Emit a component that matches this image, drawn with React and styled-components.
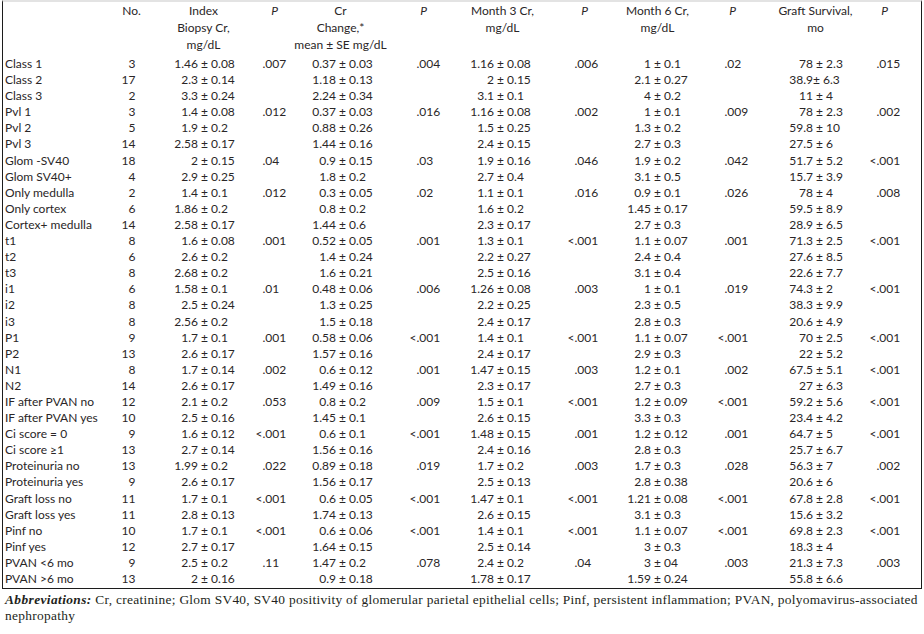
import styled, { createGlobalStyle } from "styled-components";

const GlobalStyle = createGlobalStyle`
  html, body {
    margin: 0;
    padding: 0;
    background: #ffffff;
  }
  body {
    font-family: Lato, "Open Sans", sans-serif;
    color: #2a2627;
  }
`;

const COLS = "108.5px 40px 104px 38px 94px 72px 86px 78px 68px 82px 84px 54px 8.5px";

// anchor: px from column start to the split point (number end / decimal dot)
const VALUE_COLS = [
  { anchor: 46.5, sep: "±" },
  { anchor: 7, sep: "." },
  { anchor: 42.5, sep: "±" },
  { anchor: 29, sep: "." },
  { anchor: 34.5, sep: "±" },
  { anchor: 29, sep: "." },
  { anchor: 27.5, sep: "±" },
  { anchor: 33, sep: "." },
  { anchor: 39.5, sep: "±" },
  { anchor: 19, sep: "." },
];

const ROWS = [
  ["Class 1", "3", "1.46 ± 0.08", ".007", "0.37 ± 0.03", ".004", "1.16 ± 0.08", ".006", "1 ± 0.1", ".02", "78 ± 2.3", ".015"],
  ["Class 2", "17", "2.3 ± 0.14", "", "1.18 ± 0.13", "", "2 ± 0.15", "", "2.1 ± 0.27", "", "38.9± 6.3", ""],
  ["Class 3", "2", "3.3 ± 0.24", "", "2.24 ± 0.34", "", "3.1 ± 0.1", "", "4 ± 0.2", "", "11 ± 4", ""],
  ["Pvl 1", "3", "1.4 ± 0.08", ".012", "0.37 ± 0.03", ".016", "1.16 ± 0.08", ".002", "1 ± 0.1", ".009", "78 ± 2.3", ".002"],
  ["Pvl 2", "5", "1.9 ± 0.2", "", "0.88 ± 0.26", "", "1.5 ± 0.25", "", "1.3 ± 0.2", "", "59.8 ± 10", ""],
  ["Pvl 3", "14", "2.58 ± 0.17", "", "1.44 ± 0.16", "", "2.4 ± 0.15", "", "2.7 ± 0.3", "", "27.5 ± 6", ""],
  ["Glom -SV40", "18", "2 ± 0.15", ".04", "0.9 ± 0.15", ".03", "1.9 ± 0.16", ".046", "1.9 ± 0.2", ".042", "51.7 ± 5.2", "<.001"],
  ["Glom SV40+", "4", "2.9 ± 0.25", "", "1.8 ± 0.2", "", "2.7 ± 0.4", "", "3.1 ± 0.5", "", "15.7 ± 3.9", ""],
  ["Only medulla", "2", "1.4 ± 0.1", ".012", "0.3 ± 0.05", ".02", "1.1 ± 0.1", ".016", "0.9 ± 0.1", ".026", "78 ± 4", ".008"],
  ["Only cortex", "6", "1.86 ± 0.2", "", "0.8 ± 0.2", "", "1.6 ± 0.2", "", "1.45 ± 0.17", "", "59.5 ± 8.9", ""],
  ["Cortex+ medulla", "14", "2.58 ± 0.17", "", "1.44 ± 0.6", "", "2.3 ± 0.17", "", "2.7 ± 0.3", "", "28.9 ± 6.5", ""],
  ["t1", "8", "1.6 ± 0.08", ".001", "0.52 ± 0.05", ".001", "1.3 ± 0.1", "<.001", "1.1 ± 0.07", ".001", "71.3 ± 2.5", "<.001"],
  ["t2", "6", "2.6 ± 0.2", "", "1.4 ± 0.24", "", "2.2 ± 0.27", "", "2.4 ± 0.4", "", "27.6 ± 8.5", ""],
  ["t3", "8", "2.68 ± 0.2", "", "1.6 ± 0.21", "", "2.5 ± 0.16", "", "3.1 ± 0.4", "", "22.6 ± 7.7", ""],
  ["i1", "6", "1.58 ± 0.1", ".01", "0.48 ± 0.06", ".006", "1.26 ± 0.08", ".003", "1 ± 0.1", ".019", "74.3 ± 2", "<.001"],
  ["i2", "8", "2.5 ± 0.24", "", "1.3 ± 0.25", "", "2.2 ± 0.25", "", "2.3 ± 0.5", "", "38.3 ± 9.9", ""],
  ["i3", "8", "2.56 ± 0.2", "", "1.5 ± 0.18", "", "2.4 ± 0.17", "", "2.8 ± 0.3", "", "20.6 ± 4.9", ""],
  ["P1", "9", "1.7 ± 0.1", ".001", "0.58 ± 0.06", "<.001", "1.4 ± 0.1", "<.001", "1.1 ± 0.07", "<.001", "70 ± 2.5", "<.001"],
  ["P2", "13", "2.6 ± 0.17", "", "1.57 ± 0.16", "", "2.4 ± 0.17", "", "2.9 ± 0.3", "", "22 ± 5.2", ""],
  ["N1", "8", "1.7 ± 0.14", ".002", "0.6 ± 0.12", ".001", "1.47 ± 0.15", ".003", "1.2 ± 0.1", ".002", "67.5 ± 5.1", "<.001"],
  ["N2", "14", "2.6 ± 0.17", "", "1.49 ± 0.16", "", "2.3 ± 0.17", "", "2.7 ± 0.3", "", "27 ± 6.3", ""],
  ["IF after PVAN no", "12", "2.1 ± 0.2", ".053", "0.8 ± 0.2", ".009", "1.5 ± 0.1", "<.001", "1.2 ± 0.09", "<.001", "59.2 ± 5.6", "<.001"],
  ["IF after PVAN yes", "10", "2.5 ± 0.16", "", "1.45 ± 0.1", "", "2.6 ± 0.15", "", "3.3 ± 0.3", "", "23.4 ± 4.2", ""],
  ["Ci score = 0", "9", "1.6 ± 0.12", "<.001", "0.6 ± 0.1", "<.001", "1.48 ± 0.15", ".001", "1.2 ± 0.12", ".001", "64.7 ± 5", "<.001"],
  ["Ci score ≥1", "13", "2.7 ± 0.14", "", "1.56 ± 0.16", "", "2.4 ± 0.16", "", "2.8 ± 0.3", "", "25.7 ± 6.7", ""],
  ["Proteinuria no", "13", "1.99 ± 0.2", ".022", "0.89 ± 0.18", ".019", "1.7 ± 0.2", ".003", "1.7 ± 0.3", ".028", "56.3 ± 7", ".002"],
  ["Proteinuria yes", "9", "2.6 ± 0.17", "", "1.56 ± 0.17", "", "2.5 ± 0.13", "", "2.8 ± 0.38", "", "20.6 ± 6", ""],
  ["Graft loss no", "11", "1.7 ± 0.1", "<.001", "0.6 ± 0.05", "<.001", "1.47 ± 0.1", "<.001", "1.21 ± 0.08", "<.001", "67.8 ± 2.8", "<.001"],
  ["Graft loss yes", "11", "2.8 ± 0.13", "", "1.74 ± 0.13", "", "2.6 ± 0.15", "", "3.1 ± 0.3", "", "15.6 ± 3.2", ""],
  ["Pinf no", "10", "1.7 ± 0.1", "<.001", "0.6 ± 0.06", "<.001", "1.4 ± 0.1", "<.001", "1.1 ± 0.07", "<.001", "69.8 ± 2.3", "<.001"],
  ["Pinf yes", "12", "2.7 ± 0.17", "", "1.64 ± 0.15", "", "2.5 ± 0.14", "", "3 ± 0.3", "", "18.3 ± 4", ""],
  ["PVAN <6 mo", "9", "2.5 ± 0.2", ".11", "1.47 ± 0.2", ".078", "2.4 ± 0.2", ".04", "3 ± 04", ".003", "21.3 ± 7.3", ".003"],
  ["PVAN >6 mo", "13", "2 ± 0.16", "", "0.9 ± 0.18", "", "1.78 ± 0.17", "", "1.59 ± 0.24", "", "55.8 ± 6.6", ""],
];

const Page = styled.div`
  padding: 0 2px;
  width: 920px;
`;

const TableBox = styled.div`
  border-top: 2px solid #e3e3e3;
  border-left: 1.5px solid #1c1c1c;
  border-right: 1.5px solid #1c1c1c;
  border-bottom: 1.5px solid #1c1c1c;
  padding-bottom: 1px;
  font-size: 12px;
`;

const HeadRow = styled.div`
  display: grid;
  grid-template-columns: ${COLS};
  line-height: 17px;
  height: 51px;
  margin-bottom: 3px;
`;

const HeadCell = styled.div`
  text-align: center;
  white-space: nowrap;
`;

const PMark = styled.i`
  font-style: italic;
`;

const Row = styled.div`
  display: grid;
  grid-template-columns: ${COLS};
  height: 16.1px;
  line-height: 16.1px;
  white-space: nowrap;
`;

const Label = styled.div`
  padding-left: 2px;
`;

const Count = styled.div`
  text-align: right;
  padding-right: 16px;
`;

const Split = styled.div`
  display: grid;
  grid-template-columns: ${(p) => p.$anchor}px auto;
  white-space: pre;
`;

const SplitLeft = styled.span`
  text-align: right;
`;

const SplitRight = styled.span`
  text-align: left;
`;

const Footnote = styled.p`
  margin: 3px 0 0 3px;
  font-family: "Liberation Serif", "Times New Roman", serif;
  font-size: 13.4px;
  letter-spacing: 0.29px;
  line-height: 16px;
  color: #231f20;
  white-space: nowrap;
`;

const Abbr = styled.b`
  font-style: italic;
  font-weight: bold;
  letter-spacing: 0.4px;
`;

function ValueCell({ value, anchor, sep }) {
  if (!value) return <div />;
  const i = value.indexOf(sep);
  let left = value.slice(0, i);
  let right = value.slice(i);
  if (sep === "±" && left.endsWith(" ")) {
    left = left.trimEnd();
    right = " " + right;
  }
  return (
    <Split $anchor={anchor}>
      <SplitLeft>{left}</SplitLeft>
      <SplitRight>{right}</SplitRight>
    </Split>
  );
}

const P = () => <PMark>P</PMark>;

export default function App() {
  return (
    <Page>
      <GlobalStyle />
      <TableBox>
        <HeadRow>
          <HeadCell />
          <HeadCell>No.</HeadCell>
          <HeadCell>
            Index
            <br />
            Biopsy Cr,
            <br />
            mg/dL
          </HeadCell>
          <HeadCell>
            <P />
          </HeadCell>
          <HeadCell>
            Cr
            <br />
            Change,*
            <br />
            mean ± SE mg/dL
          </HeadCell>
          <HeadCell>
            <P />
          </HeadCell>
          <HeadCell>
            Month 3 Cr,
            <br />
            mg/dL
          </HeadCell>
          <HeadCell>
            <P />
          </HeadCell>
          <HeadCell>
            Month 6 Cr,
            <br />
            mg/dL
          </HeadCell>
          <HeadCell>
            <P />
          </HeadCell>
          <HeadCell>
            Graft Survival,
            <br />
            mo
          </HeadCell>
          <HeadCell>
            <P />
          </HeadCell>
          <HeadCell />
        </HeadRow>
        {ROWS.map(([label, n, ...vals]) => (
          <Row key={label}>
            <Label>{label}</Label>
            <Count>{n}</Count>
            {vals.map((v, i) => (
              <ValueCell key={i} value={v} {...VALUE_COLS[i]} />
            ))}
            <div />
          </Row>
        ))}
      </TableBox>
      <Footnote>
        <Abbr>Abbreviations:</Abbr> Cr, creatinine; Glom SV40, SV40 positivity of
        glomerular parietal epithelial cells; Pinf, persistent inflammation;
        PVAN, polyomavirus-associated
        <br />
        nephropathy
      </Footnote>
    </Page>
  );
}
